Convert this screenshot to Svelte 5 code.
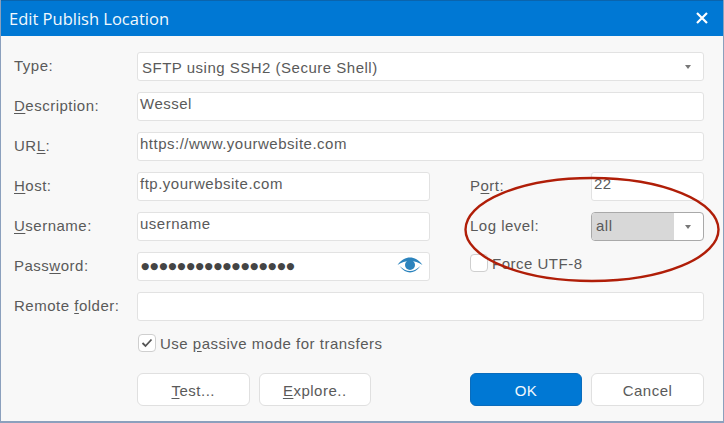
<script>
    const password = "●".repeat(17);
</script>

<div class="window">
    <div class="titlebar">
        <span class="title">Edit Publish Location</span>
        <svg class="close" width="14" height="14" viewBox="0 0 14 14">
            <path d="M2 2 L12 12 M12 2 L2 12" stroke="#fff" stroke-width="2.2" fill="none" />
        </svg>
    </div>

    <div class="body">
        <div class="form">
            <span class="label">Type:</span>
            <div class="field wide select">
                <span class="val type">SFTP using SSH2 (Secure Shell)</span>
                <span class="arrow"></span>
            </div>

            <span class="label"><u>D</u>escription:</span>
            <div class="field wide"><span class="val">Wessel</span></div>

            <span class="label">UR<u>L</u>:</span>
            <div class="field wide"><span class="val">https://www.yourwebsite.com</span></div>

            <span class="label"><u>H</u>ost:</span>
            <div class="field"><span class="val">ftp.yourwebsite.com</span></div>
            <span class="label rlabel">P<u>o</u>rt:</span>
            <div class="field"><span class="val">22</span></div>

            <span class="label"><u>U</u>sername:</span>
            <div class="field"><span class="val">username</span></div>
            <span class="label rlabel">Log level:</span>
            <div class="field select focus">
                <span class="sel-val">all</span>
                <span class="arrow"></span>
            </div>

            <span class="label">Pass<u>w</u>ord:</span>
            <div class="field pass">
                <span class="dots">{password}</span>
                <svg class="eye" width="26" height="18" viewBox="0 0 26 18">
                    <path d="M0.5 8 C4.5 2.5 8.5 0.5 13 0.5 C17.5 0.5 21.5 2.5 25.5 8 C21.5 5.2 17.5 4 13 4 C8.5 4 4.5 5.2 0.5 8 Z" fill="#2b83bd" />
                    <path d="M2.5 9 C6 13.5 9.5 15.5 13 15.5 C16.5 15.5 20 13.5 23.5 9 C20 12 16.5 14 13 14 C9.5 14 6 12 2.5 9 Z" fill="#2b83bd" />
                    <circle cx="13" cy="8" r="5" fill="#2b83bd" />
                </svg>
            </div>
            <label class="check rcheck">
                <span class="box"></span>
                <span>Force UTF-8</span>
            </label>

            <span class="label">Remote <u>f</u>older:</span>
            <div class="field wide"></div>
        </div>

        <label class="check passive">
            <span class="box">
                <svg width="12" height="10" viewBox="0 0 12 10">
                    <path d="M1.5 5 L4.5 8 L10.5 1.5" stroke="#555" stroke-width="1.8" fill="none" />
                </svg>
            </span>
            <span class="passive-text">Use <u>p</u>assive mode for transfers</span>
        </label>

        <div class="buttons">
            <div class="group">
                <button class="btn"><u>T</u>est...</button>
                <button class="btn"><u>E</u>xplore..</button>
            </div>
            <div class="group">
                <button class="btn primary">OK</button>
                <button class="btn cancel">Cancel</button>
            </div>
        </div>
    </div>

    <svg class="ring" width="262" height="112" viewBox="0 0 262 112">
        <ellipse cx="130" cy="55.5" rx="126.5" ry="51.5" fill="none" stroke="#b01e08" stroke-width="2.4" />
    </svg>
</div>

<style>
    :global(body) {
        margin: 0;
        background: #f8f8f8;
    }

    .window {
        position: relative;
        width: 724px;
        height: 423px;
        box-sizing: border-box;
        background: #f8f8f8;
        border-left: 1px solid #8ba0bd;
        border-right: 1px solid #8ba0bd;
        border-bottom: 2px solid #8ba0bd;
        overflow: hidden;
        font-family: "Liberation Sans", Arial, sans-serif;
        font-size: 15px;
        letter-spacing: 0.5px;
        color: #5a5a5a;
    }

    .titlebar {
        height: 36px;
        margin: 0 -1px;
        padding: 0 15px 0 9px;
        box-sizing: border-box;
        background: #0078d4;
        border-top: 1px solid #0a64ad;
        display: flex;
        align-items: center;
        justify-content: space-between;
    }

    .title {
        font-family: "Open Sans", sans-serif;
        font-size: 16.5px;
        letter-spacing: 0;
        color: #f2f8fd;
    }

    .close {
        margin-bottom: 1px;
    }

    .body {
        padding: 16px 19px 0 13px;
    }

    .form {
        display: grid;
        grid-template-columns: 123px 293px 40px 121px 113px;
        grid-auto-rows: 29px;
        row-gap: 11px;
    }

    .label {
        align-self: start;
        line-height: 28px;
    }

    .rlabel {
        grid-column: 4;
    }

    u {
        text-underline-offset: 2px;
    }

    .field {
        box-sizing: border-box;
        background: #fff;
        border: 1px solid #e2e2e2;
        border-radius: 3px;
        display: flex;
        align-items: center;
        position: relative;
    }

    .wide {
        grid-column: 2 / 6;
    }

    .val {
        padding-left: 2px;
        margin-top: -6px;
    }

    .val.type {
        padding-left: 4px;
        margin-top: 2px;
    }

    .arrow {
        position: absolute;
        right: 12px;
        top: 12px;
        width: 0;
        height: 0;
        border-left: 3.5px solid transparent;
        border-right: 3.5px solid transparent;
        border-top: 4px solid #777;
    }

    .focus {
        border-color: #a9a9a9;
        border-radius: 4px;
        overflow: hidden;
    }

    .sel-val {
        width: 82px;
        height: 100%;
        background: #d8d8d8;
        padding-left: 4px;
        box-sizing: border-box;
        line-height: 26px;
    }

    .pass {
        justify-content: space-between;
        padding-right: 6px;
    }

    .dots {
        padding-left: 3px;
        margin-top: -2px;
        font-family: "DejaVu Sans", sans-serif;
        font-size: 9.4px;
        letter-spacing: 0.9px;
        color: #444;
    }

    .eye {
        margin-top: -1px;
    }

    .check {
        display: flex;
        align-items: center;
        gap: 4px;
    }

    .box {
        width: 18px;
        height: 18px;
        box-sizing: border-box;
        background: #fff;
        border: 1px solid #cfcfcf;
        border-radius: 4px;
        display: flex;
        align-items: center;
        justify-content: center;
    }

    .rcheck {
        grid-column: 4 / 6;
        align-self: start;
        margin-top: 2px;
    }

    .passive {
        margin: 12px 0 0 124px;
    }

    .passive-text {
        margin-top: 2px;
    }

    .buttons {
        display: flex;
        justify-content: space-between;
        margin: 21px 0 0 123px;
    }

    .group {
        display: flex;
        gap: 9px;
    }

    .btn {
        width: 112.5px;
        height: 33px;
        padding: 2px 0 0;
        background: #fff;
        border: 1px solid #e0e0e0;
        border-radius: 6px;
        font: inherit;
        letter-spacing: inherit;
        color: #5a5a5a;
    }

    .primary {
        width: 112px;
        background: #0078d4;
        border-color: #0a6cbc;
        color: #f2f8fd;
    }

    .cancel {
        width: 113px;
    }

    .ring {
        position: absolute;
        left: 461px;
        top: 174px;
        pointer-events: none;
    }
</style>
